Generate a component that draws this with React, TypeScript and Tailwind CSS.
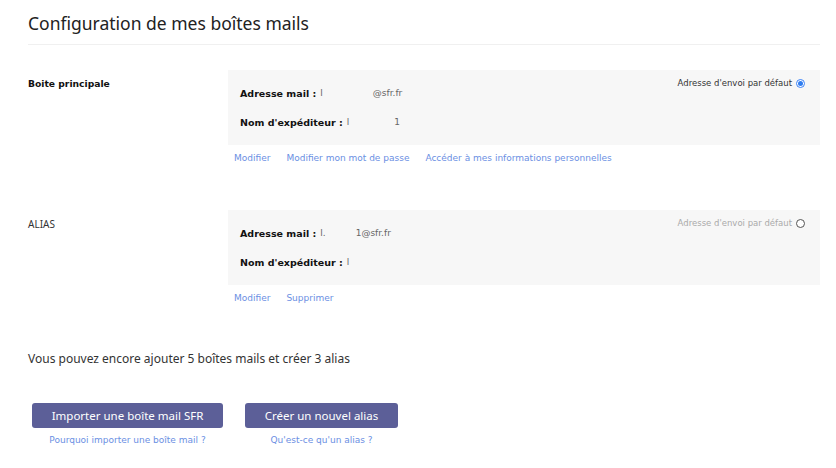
import React from "react";

const verdana = { fontFamily: '"DejaVu Sans", Verdana, sans-serif' };
const human = { fontFamily: '"Noto Sans", "Open Sans", sans-serif' };

function Radio({ checked }: { checked: boolean }) {
  return checked ? (
    <span className="inline-flex w-[9px] h-[9px] rounded-full border border-[#3b82f6] items-center justify-center bg-white">
      <span className="w-[5px] h-[5px] rounded-full bg-[#2f7df0]" />
    </span>
  ) : (
    <span className="inline-block w-[9px] h-[9px] rounded-full border border-[#555] bg-white" />
  );
}

function Box({
  checked,
  mail,
  name,
}: {
  checked: boolean;
  mail: React.ReactNode;
  name: React.ReactNode;
}) {
  return (
    <div className="relative bg-[#f7f7f7] h-[75px] pt-[17px] pl-[12px]" style={verdana}>
      <div
        className={`absolute right-[15px] top-[8px] flex items-center gap-[4px] text-[8.5px] leading-[11px] ${
          checked ? "text-[#333]" : "text-[#aaa]"
        }`}
      >
        <span>Adresse d'envoi par défaut</span>
        <Radio checked={checked} />
      </div>
      <div className="flex items-center h-[14px] text-[9.5px] text-[#111]">
        <span className="font-bold">Adresse mail :</span>
        {mail}
      </div>
      <div className="flex items-center h-[14px] mt-[15px] text-[9.5px] text-[#111]">
        <span className="font-bold">Nom d'expéditeur :</span>
        {name}
      </div>
    </div>
  );
}

export default function App() {
  return (
    <div className="w-[836px] h-[468px] bg-white overflow-hidden pl-[28px] pr-[16px]">
      <div className="pt-[11px] h-[45px] border-b border-[#f0f0f0]">
        <h1 className="text-[17.5px] leading-[24px] text-[#222]" style={human}>
          Configuration de mes boîtes mails
        </h1>
      </div>

      <div className="flex mt-[25px]">
        <div className="w-[200px] pt-[8px] text-[9.2px] leading-[12px] font-bold text-[#111]" style={verdana}>
          Boite principale
        </div>
        <div className="flex-1">
          <Box
            checked
            mail={
              <span className="text-[9px] text-[#666] font-normal">
                <span className="ml-[4px]">l</span>
                <span className="ml-[50px]">@sfr.fr</span>
              </span>
            }
            name={
              <span className="text-[9px] text-[#666]">
                <span className="ml-[4px]">l</span>
                <span className="ml-[45px]">1</span>
              </span>
            }
          />
          <div className="flex gap-[16px] pl-[6px] mt-[7px] text-[9px] leading-[12px] text-[#6b8fe3]" style={verdana}>
            <span>Modifier</span>
            <span>Modifier mon mot de passe</span>
            <span>Accéder à mes informations personnelles</span>
          </div>
        </div>
      </div>

      <div className="flex mt-[46px]">
        <div className="w-[200px] pt-[8px] text-[10px] leading-[12px] text-[#333]" style={human}>
          ALIAS
        </div>
        <div className="flex-1">
          <Box
            checked={false}
            mail={
              <span className="text-[9px] text-[#666]">
                <span className="ml-[4px]">l.</span>
                <span className="ml-[30px]">1@sfr.fr</span>
              </span>
            }
            name={
              <span className="text-[9px] text-[#666]">
                <span className="ml-[4px]">l</span>
              </span>
            }
          />
          <div className="flex gap-[16px] pl-[6px] mt-[7px] text-[9px] leading-[12px] text-[#6b8fe3]" style={verdana}>
            <span>Modifier</span>
            <span>Supprimer</span>
          </div>
        </div>
      </div>

      <p className="mt-[47px] text-[12px] leading-[16px] text-[#333]" style={human}>
        Vous pouvez encore ajouter 5 boîtes mails et créer 3 alias
      </p>

      <div className="flex gap-[22px] mt-[36px] pl-[4px]">
        <div className="flex flex-col items-center w-[191px]">
          <button
            className="w-full h-[25px] rounded-[3px] bg-[#5c5f98] text-white text-[11.5px] leading-[25px]"
            style={human}
          >
            Importer une boîte mail SFR
          </button>
          <span className="mt-[6px] text-[9px] leading-[12px] text-[#6b8fe3]" style={verdana}>
            Pourquoi importer une boîte mail ?
          </span>
        </div>
        <div className="flex flex-col items-center w-[153px]">
          <button
            className="w-full h-[25px] rounded-[3px] bg-[#5c5f98] text-white text-[11.5px] leading-[25px]"
            style={human}
          >
            Créer un nouvel alias
          </button>
          <span className="mt-[6px] text-[9px] leading-[12px] text-[#6b8fe3]" style={verdana}>
            Qu'est-ce qu'un alias ?
          </span>
        </div>
      </div>
    </div>
  );
}
